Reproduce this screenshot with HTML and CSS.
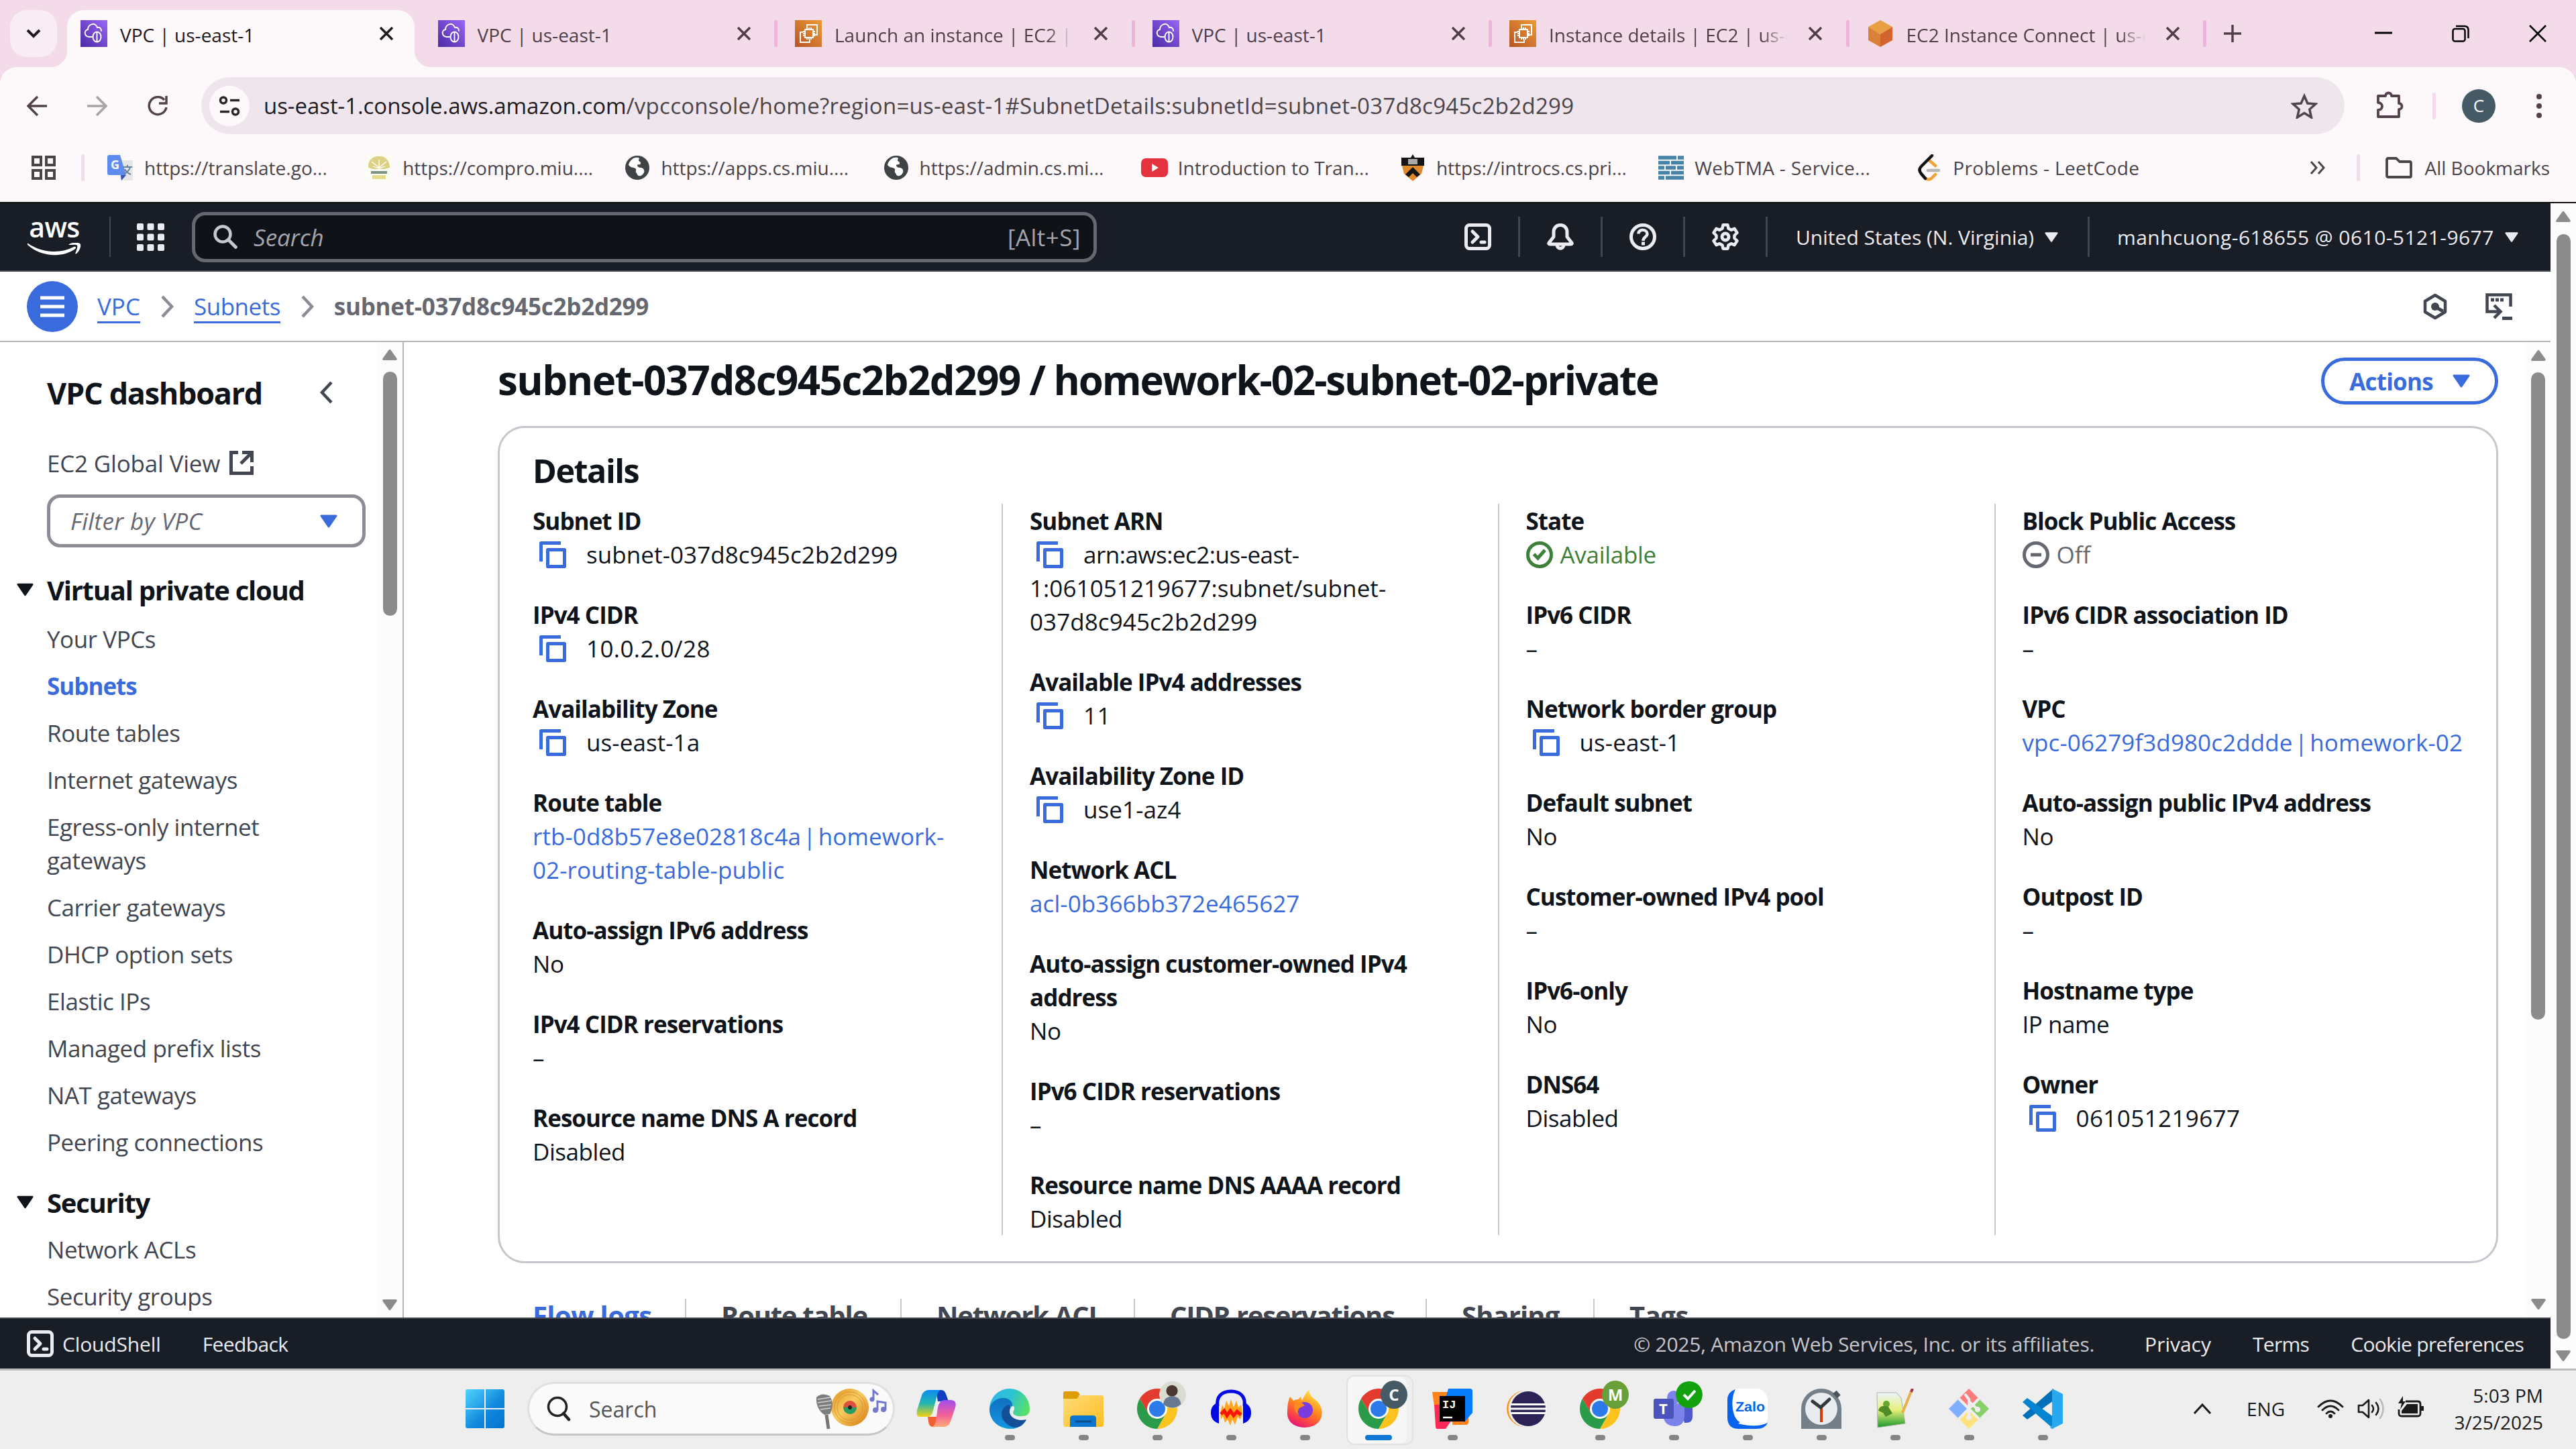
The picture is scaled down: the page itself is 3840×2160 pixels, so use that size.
FILE: index.html
```html
<!DOCTYPE html>
<html lang="en">
<head>
<meta charset="utf-8">
<title>VPC | us-east-1</title>
<link rel="stylesheet" href="styles.css">
</head>
<body>
<svg class="defs" aria-hidden="true">
  <defs>
    <linearGradient id="gVpc" x1="0" y1="1" x2="1" y2="0"><stop offset="0" stop-color="#4a2aa4"/><stop offset="1" stop-color="#9a66f6"/></linearGradient>
    <linearGradient id="gEc2" x1="0" y1="1" x2="1" y2="0"><stop offset="0" stop-color="#b85426"/><stop offset="1" stop-color="#ec9c36"/></linearGradient>
    <linearGradient id="gWin" x1="0" y1="0" x2="1" y2="1"><stop offset="0" stop-color="#50d4fe"/><stop offset=".6" stop-color="#0f86dc"/><stop offset="1" stop-color="#0474d0"/></linearGradient>
    <linearGradient id="gEdge" x1="0" y1="0" x2="1" y2=".5"><stop offset="0" stop-color="#2fb4ee"/><stop offset=".5" stop-color="#2cc3d2"/><stop offset="1" stop-color="#5be25f"/></linearGradient>
    <linearGradient id="gEdgeB" x1="0" y1="0" x2="0" y2="1"><stop offset="0" stop-color="#0f6fc0"/><stop offset="1" stop-color="#1596e2"/></linearGradient>
    <linearGradient id="gFold" x1="0" y1="0" x2="1" y2="1"><stop offset="0" stop-color="#ffdc78"/><stop offset="1" stop-color="#fcbd23"/></linearGradient>
    <linearGradient id="gCopA" x1="0" y1="0" x2="0" y2="1"><stop offset="0" stop-color="#0b8df0"/><stop offset=".5" stop-color="#23b6b0"/><stop offset="1" stop-color="#f3d111"/></linearGradient>
    <linearGradient id="gCopB" x1="0" y1="0" x2="0" y2="1"><stop offset="0" stop-color="#a24af0"/><stop offset=".55" stop-color="#f2609a"/><stop offset="1" stop-color="#ffab72"/></linearGradient>
    <linearGradient id="gFox" x1=".8" y1="0" x2=".3" y2="1"><stop offset="0" stop-color="#fff04c"/><stop offset=".45" stop-color="#ff8f1c"/><stop offset=".8" stop-color="#fb3d48"/><stop offset="1" stop-color="#e0157c"/></linearGradient>
    <linearGradient id="gGold" x1="0" y1="0" x2="1" y2="1"><stop offset="0" stop-color="#e08f17"/><stop offset=".45" stop-color="#f8cc63"/><stop offset="1" stop-color="#d8780c"/></linearGradient>
    <linearGradient id="gNpp" x1="0" y1="0" x2="0" y2="1"><stop offset="0" stop-color="#eef4fb"/><stop offset=".5" stop-color="#e6f07a"/><stop offset="1" stop-color="#17982a"/></linearGradient>
    <symbol id="vpc" viewBox="0 0 40 40"><path fill="url(#gVpc)" d="M0 0h40v40H0z"/><path fill="none" stroke="#fff" stroke-width="2" stroke-linecap="round" d="M17 25h-4c-8-1-8-10-2-11 0-8 11-12 14-3 5-1 6 3 6 5"/><ellipse cx="24.500" cy="25" rx="6" ry="7.500" fill="#6a41cc" stroke="#fff" stroke-width="2"/><path d="M24.500 18v14" stroke="#fff" stroke-width="2"/></symbol>
    <symbol id="ec2" viewBox="0 0 40 40"><path fill="url(#gEc2)" d="M0 0h40v40H0z"/><g fill="none" stroke="#fff" stroke-width="2"><path d="M18 11V7h15v15h-5M12 18H8v15h14v-4"/><rect x="15" y="14" width="12" height="12"/><path d="M18 11v3m3-3v3m3-3v3m-6 12v3m3-3v3m3-3v3M12 17h3m-3 3h3m-3 3h3m12-6h3m-3 3h3m-3 3h3"/></g></symbol>
    <symbol id="cube" viewBox="0 0 40 40"><path fill="#e8a042" d="m20 0 18 10-18 11L2 10z"/><path fill="#dc8038" d="m2 10 18 11v19L2 30z"/><path fill="#d3632f" d="m38 10-18 11v19l18-10z"/></symbol>
    <symbol id="x" viewBox="0 0 20 20"><path stroke="currentColor" stroke-width="3.500" d="m1 1 18 18M19 1 1 19"/></symbol>
    <symbol id="globe" viewBox="0 0 36 36"><circle cx="18" cy="18" r="18" fill="#3f4346"/><path fill="#fff" d="M20 3c-8-2-14 5-15 11 4 5 7 3 10 5s-1 5 2 7c1 3 3 6 8 3 6-5 3-10-1-11-3 0-6-1-6-4 1-2 5 1 5-3 0-3-3-2-3-4s2-2 0-4z"/></symbol>
    <symbol id="copy" viewBox="0 0 40 40"><path fill="none" stroke="#3a6bdc" stroke-width="5" d="M32 2.500H2.500V30M12.500 12.500h25v25h-25z" stroke-linejoin="round"/></symbol>
    <symbol id="down" viewBox="0 0 26 20"><path fill="currentColor" stroke="currentColor" stroke-width="3" stroke-linejoin="round" d="M2 2h22L13 18z"/></symbol>
    <symbol id="up" viewBox="0 0 26 20"><path fill="#8b8b8b" stroke="#8b8b8b" stroke-width="4" stroke-linejoin="round" d="M3 17h20L13 3z"/></symbol>
    <symbol id="dn" viewBox="0 0 26 20"><path fill="#8b8b8b" stroke="#8b8b8b" stroke-width="4" stroke-linejoin="round" d="M3 3h20L13 17z"/></symbol>
    <symbol id="chev" viewBox="0 0 20 34"><path fill="none" stroke="currentColor" stroke-width="4.500" d="m2 2 14 15L2 32"/></symbol>
    <symbol id="term" viewBox="0 0 40 40"><rect x="2.500" y="2.500" width="35" height="35" rx="5" fill="none" stroke="currentColor" stroke-width="5"/><path fill="none" stroke="currentColor" stroke-width="5" stroke-linecap="round" stroke-linejoin="round" d="m12 12 8 8-8 8m13 0h5"/></symbol>
    <symbol id="lens" viewBox="0 0 36 36"><circle cx="14" cy="14" r="11.500" fill="none" stroke="currentColor" stroke-width="4.500"/><path stroke="currentColor" stroke-width="5" d="m22 22 13 13"/></symbol>
    <symbol id="chrome" viewBox="0 0 60 60"><path fill="#fcc31e" d="M30 16h26.500A30 30 0 0 1 30 60l13-23z"/><path fill="#2a9b48" d="M17 37 4 15a30 30 0 0 0 26 45l13-23z"/><path fill="#e33b2e" d="M17 37 4 15a30 30 0 0 1 52.500 1H30z"/><circle cx="30" cy="30" r="15" fill="#fff"/><circle cx="30" cy="30" r="12" fill="#2d7bea"/></symbol>
  </defs>
</svg>

<div class="tabstrip">
  <div class="tabsearch"><svg width="22" height="14" viewBox="0 0 22 14"><path fill="none" stroke="#1f1a1d" stroke-width="4" d="m2 2 9 9 9-9"/></svg></div>
  <div class="tab active"><svg class="fav"><use href="#vpc"/></svg><span>VPC | us-east-1</span><svg class="close"><use href="#x"/></svg></div>
  <div class="tab sep"><svg class="fav"><use href="#vpc"/></svg><span>VPC | us-east-1</span><svg class="close"><use href="#x"/></svg></div>
  <div class="tab sep"><svg class="fav"><use href="#ec2"/></svg><span class="fade">Launch an instance | EC2 | us-east-1</span><svg class="close"><use href="#x"/></svg></div>
  <div class="tab sep"><svg class="fav"><use href="#vpc"/></svg><span>VPC | us-east-1</span><svg class="close"><use href="#x"/></svg></div>
  <div class="tab sep"><svg class="fav"><use href="#ec2"/></svg><span class="fade">Instance details | EC2 | us-east-1</span><svg class="close"><use href="#x"/></svg></div>
  <div class="tab sep"><svg class="fav"><use href="#cube"/></svg><span class="fade">EC2 Instance Connect | us-east-1</span><svg class="close"><use href="#x"/></svg></div>
  <svg class="plus" width="26" height="26" viewBox="0 0 26 26"><path stroke="#4f3f49" stroke-width="3.500" d="M13 0v26M0 13h26"/></svg>
  <div class="winbtns">
    <svg width="26" height="26" viewBox="0 0 26 26"><path stroke="#000" stroke-width="3" d="M0 12h26"/></svg>
    <svg width="26" height="26" viewBox="0 0 26 26"><g fill="none" stroke="#000" stroke-width="2.500"><rect x="1.500" y="6" width="18" height="18.500" rx="3"/><path d="M6 2h13q5.500 0 5.500 6v12"/></g></svg>
    <svg width="26" height="26" viewBox="0 0 26 26"><path stroke="#000" stroke-width="2.500" d="m1 1 24 24M25 1 1 25"/></svg>
  </div>
</div>

<div class="chrome">
  <div class="toolbar">
    <svg class="nav n1" viewBox="0 0 30 30"><path fill="none" stroke="#52414b" stroke-width="3.500" d="M30 15H2M16 1 2 15l14 14"/></svg>
    <svg class="nav n2" viewBox="0 0 30 30"><path fill="none" stroke="#a8a3a6" stroke-width="3.500" d="M0 15h28M14 1l14 14-14 14"/></svg>
    <svg class="nav n3" viewBox="0 0 30 30"><path fill="none" stroke="#52414b" stroke-width="3.500" d="M28 17A13 13 0 1 1 25 6M28 0v11H17"/></svg>
    <div class="omnibox">
      <span class="site"><svg width="32" height="30" viewBox="0 0 32 30"><g fill="none" stroke="#2a2428" stroke-width="3.500"><circle cx="7" cy="6.500" r="4.500"/><path d="M17 6.500h14M2 23.500h14"/><circle cx="25" cy="23.500" r="4.500"/></g></svg></span>
      <span class="url"><b>us-east-1.console.aws.amazon.com</b>/vpcconsole/home?region=us-east-1#SubnetDetails:subnetId=subnet-037d8c945c2b2d299</span>
      <svg class="star" viewBox="0 0 40 38"><path fill="none" stroke="#4f454b" stroke-width="3.500" d="m20 4 4.800 11 12 1-9 8 2.700 12L20 29.500 9.500 36l2.700-12-9-8 12-1z"/></svg>
    </div>
    <svg class="ext" viewBox="0 0 40 40"><path fill="none" stroke="#52414b" stroke-width="3.800" stroke-linejoin="round" d="M2 7h11c0-6 9-6 9 0h11v11c6 0 6 9 0 9v11H2V28c8 0 8-11 0-11z"/></svg>
    <i class="vline"></i>
    <span class="avatar">C</span>
    <svg class="dots" viewBox="0 0 8 36"><g fill="#52414b"><circle cx="4" cy="4" r="4"/><circle cx="4" cy="18" r="4"/><circle cx="4" cy="32" r="4"/></g></svg>
  </div>
  <div class="bookmarks">
    <svg class="apps" viewBox="0 0 36 36"><path fill="none" stroke="#4a4347" stroke-width="4" d="M2 2h12v12H2zM22 2h12v12H22zM2 22h12v12H2zM22 22h12v12H22z"/></svg>
    <i class="vline"></i>
    <div class="bm"><svg viewBox="0 0 40 40"><path fill="#e3e5e8" d="M14 9h24v30H20z"/><path fill="#5d8bee" d="M3 1h16l9 30H3q-3 0-3-3V4q0-3 3-3z"/><path fill="#3c50b4" d="m20 31 8 0-7 8z"/><text x="5" y="22" font-family="Open Sans" font-weight="700" font-size="18" fill="#fff">G</text><path stroke="#6c8296" stroke-width="2" fill="none" d="M24 19h13M30 16v3m4 0c-1 5-6 9-9 10m1-7c2 4 6 7 9 8"/></svg><span>https://translate.go...</span></div>
    <div class="bm"><svg viewBox="0 0 40 40"><path fill="#fbfcf4" d="M0 0h40v40H0z"/><path fill="#dcd182" d="M4 20C3 8 12 2 20 3c9-1 16 6 16 17l-8 2H12z"/><path stroke="#fff" stroke-width="1.300" fill="none" d="M20 22V8m0 12L9 11m11 9 11-9m-20 7 9 3 9-3"/><path stroke="#7d9384" stroke-width="4" d="M8 27h24"/><path stroke="#e4db8b" stroke-width="6" d="M10 34h20"/></svg><span>https://compro.miu....</span></div>
    <div class="bm"><svg viewBox="-2 -2 40 40"><use href="#globe" width="36" height="36"/></svg><span>https://apps.cs.miu....</span></div>
    <div class="bm"><svg viewBox="-2 -2 40 40"><use href="#globe" width="36" height="36"/></svg><span>https://admin.cs.mi...</span></div>
    <div class="bm"><svg viewBox="0 0 40 40"><rect y="6" width="40" height="28" rx="7" fill="#e5323f"/><path fill="#fff" d="m16 14 10 6-10 6z"/></svg><span>Introduction to Tran...</span></div>
    <div class="bm"><svg viewBox="0 0 40 40"><path fill="#151515" d="M20 0l3 5h14v12H3V5h14z"/><path fill="#aaa" d="M13 7h14v8H13z"/><path fill="#e08a2e" d="M4 17h32l-3 12-13 11L7 29z"/><path fill="#151515" d="m20 19 11 11-5 4-6-6-6 6-5-4z"/></svg><span>https://introcs.cs.pri...</span></div>
    <div class="bm wide"><svg viewBox="0 0 40 40"><g stroke="#4683a8" stroke-width="5.500" fill="none"><path d="M1 5h27m2 0h9M1 12.500h17m2 0h19M1 20h9m2 0h15m2 0h10M1 27.500h17m2 0h19M1 35h9m2 0h27"/></g></svg><span>WebTMA - Service...</span></div>
    <div class="bm wide"><svg viewBox="0 0 40 40"><g fill="none" stroke-width="4.500" stroke-linecap="round"><path stroke="#f0a235" d="m20 9 9 8M29 30l-6 6q-4 3-8 0"/><path stroke="#111" d="M24 2 8 18q-5 5 0 11l6 7"/><path stroke="#b5b5b5" d="M18 24h16"/></g></svg><span>Problems - LeetCode</span></div>
    <svg class="more" viewBox="0 0 24 20"><path fill="none" stroke="#4a4347" stroke-width="3" d="m2 1 8 9-8 9M13 1l8 9-8 9"/></svg>
    <i class="vline"></i>
    <svg class="folder" viewBox="0 0 40 32"><path fill="none" stroke="#4a4347" stroke-width="3.800" stroke-linejoin="round" d="M4 2h12l5 5h15q2 0 2 2v19q0 2-2 2H4q-2 0-2-2V4q0-2 2-2z"/></svg>
    <span class="all">All Bookmarks</span>
  </div>
</div>

<div class="page">
  <div class="app">
    <header class="awsnav">
      <div class="logo"><span>aws</span><svg viewBox="0 0 80 20"><path fill="#fff" d="M1 1c22 15 48 15 68 5 3-1 4 1 2 3C52 23 20 21 0 3c-1-2 0-3 1-2z"/><path fill="#fff" d="M62 2c5-3 13-3 16-1s0 11-5 15c-2 1-2 0-1-2 1-3 3-8 2-10s-7-1-11-1c-1 0-2 0-1-1z"/></svg></div>
      <i class="hline l1"></i>
      <svg class="grid9" viewBox="0 0 41 41"><g fill="#ebebf0"><rect width="10" height="10" rx="2"/><rect x="15.500" width="10" height="10" rx="2"/><rect x="31" width="10" height="10" rx="2"/><rect y="15.500" width="10" height="10" rx="2"/><rect x="15.500" y="15.500" width="10" height="10" rx="2"/><rect x="31" y="15.500" width="10" height="10" rx="2"/><rect y="31" width="10" height="10" rx="2"/><rect x="15.500" y="31" width="10" height="10" rx="2"/><rect x="31" y="31" width="10" height="10" rx="2"/></g></svg>
      <div class="search"><svg><use href="#lens"/></svg><em>Search</em><span>[Alt+S]</span></div>
      <div class="tools">
        <div><svg><use href="#term"/></svg></div>
        <div><svg viewBox="0 0 40 40"><g fill="none" stroke="currentColor" stroke-width="5" stroke-linejoin="round"><path d="M10 13c0-14 20-14 20 0v7l7 9q1 2-2 2H5q-3 0-2-2l7-9z"/><path d="M15 32c0 7 10 7 10 0"/></g></svg></div>
        <div><svg viewBox="0 0 40 40"><circle cx="20" cy="20" r="17.500" fill="none" stroke="currentColor" stroke-width="5"/><path fill="none" stroke="currentColor" stroke-width="4.500" d="M13.500 15.500c0-8 13-7 13 0 0 5-6 4-6 10.500"/><path stroke="currentColor" stroke-width="5" d="M20.500 27.500v5"/></svg></div>
        <div><svg viewBox="0 0 40 40"><path fill="none" stroke="currentColor" stroke-width="4.500" stroke-linejoin="round" d="M16.500 2.300h7l1 5.200 4 2.300 5-2 4 6.200-4 4v4l4 4-4 6.200-5-2-4 2.300-1 5.200h-7l-1-5.200-4-2.300-5 2L2.500 26l4-4v-4l-4-4 4-6.200 5 2 4-2.300z"/><circle cx="20" cy="20" r="5" fill="none" stroke="currentColor" stroke-width="5"/></svg></div>
      </div>
      <div class="region"><span>United States (N. Virginia)</span><svg><use href="#down"/></svg></div>
      <div class="account"><span>manhcuong-618655 @ 0610-5121-9677</span><svg><use href="#down"/></svg></div>
    </header>

    <div class="crumbs">
      <span class="burger"><svg viewBox="0 0 36 32"><path stroke="#fff" stroke-width="5" d="M0 3h36M0 16h36M0 29h36"/></svg></span>
      <a>VPC</a><svg class="cv"><use href="#chev"/></svg><a class="sn">Subnets</a><svg class="cv"><use href="#chev"/></svg><b>subnet-037d8c945c2b2d299</b>
      <svg class="hex" viewBox="0 0 36 40"><path fill="none" stroke="#424650" stroke-width="4.500" stroke-linejoin="round" d="M18 3 33 12v16l-15 9-15-9V12z"/><circle cx="18" cy="20" r="6" fill="#424650"/><path stroke="#424650" stroke-width="5" d="m19 21 11 6"/></svg>
      <svg class="feed" viewBox="0 0 40 40"><path fill="none" stroke="#424650" stroke-width="4.500" d="M37.500 20V2.500h-35v25H22M13 18l9.500 9.500L13 37"/><path stroke="#424650" stroke-width="5" d="M25 37.500h15M8 10h5m2 0h5m2 0h5"/></svg>
    </div>

    <div class="body">
      <nav class="side">
        <div class="links">
          <div class="dash"><h2>VPC dashboard</h2><svg viewBox="0 0 20 34"><path fill="none" stroke="#424650" stroke-width="4.500" d="M18 2 4 17l14 15"/></svg></div>
          <div class="gv">EC2 Global View<svg viewBox="0 0 36 36"><path fill="none" stroke="#424650" stroke-width="5" d="M13 2.500H2.500v31h31V23M19 2.500h14.500V17M33 3 17 19"/></svg></div>
          <div class="filter"><em>Filter by VPC</em><svg><use href="#down"/></svg></div>
          <h3><svg><use href="#down"/></svg>Virtual private cloud</h3>
          <a>Your VPCs</a><a class="cur">Subnets</a><a>Route tables</a><a>Internet gateways</a><a>Egress-only internet<br>gateways</a><a>Carrier gateways</a><a>DHCP option sets</a><a>Elastic IPs</a><a>Managed prefix lists</a><a>NAT gateways</a><a>Peering connections</a>
          <h3><svg><use href="#down"/></svg>Security</h3>
          <a>Network ACLs</a><a>Security groups</a>
        </div>
        <div class="sb s1"><svg><use href="#up"/></svg><i></i><svg><use href="#dn"/></svg></div>
      </nav>
      <main>
        <div class="content">
          <div class="title"><h1><span>subnet-037d8c945c2b2d299</span> / homework-02-subnet-02-private</h1><div class="actions">Actions<svg><use href="#down"/></svg></div></div>
          <section class="card">
            <h2>Details</h2>
            <div class="cols">
              <dl>
                <div><dt>Subnet ID</dt><dd class="id"><svg class="cp"><use href="#copy"/></svg>subnet-037d8c945c2b2d299</dd></div>
                <div><dt>IPv4 CIDR</dt><dd class="num"><svg class="cp"><use href="#copy"/></svg>10.0.2.0/28</dd></div>
                <div><dt>Availability Zone</dt><dd class="id"><svg class="cp"><use href="#copy"/></svg>us-east-1a</dd></div>
                <div><dt>Route table</dt><dd class="lk">rtb-0d8b57e8e02818c4a | homework-<br>02-routing-table-public</dd></div>
                <div><dt>Auto-assign IPv6 address</dt><dd>No</dd></div>
                <div><dt>IPv4 CIDR reservations</dt><dd>–</dd></div>
                <div><dt>Resource name DNS A record</dt><dd>Disabled</dd></div>
              </dl>
              <dl>
                <div><dt>Subnet ARN</dt><dd class="id"><svg class="cp"><use href="#copy"/></svg><span class="arn">arn:aws:ec2:us-east-</span><br>1:061051219677:subnet/subnet-<br>037d8c945c2b2d299</dd></div>
                <div><dt>Available IPv4 addresses</dt><dd class="num"><svg class="cp"><use href="#copy"/></svg>11</dd></div>
                <div><dt>Availability Zone ID</dt><dd class="id"><svg class="cp"><use href="#copy"/></svg>use1-az4</dd></div>
                <div><dt>Network ACL</dt><dd class="lk">acl-0b366bb372e465627</dd></div>
                <div><dt>Auto-assign customer-owned IPv4<br>address</dt><dd>No</dd></div>
                <div><dt>IPv6 CIDR reservations</dt><dd>–</dd></div>
                <div><dt>Resource name DNS AAAA record</dt><dd>Disabled</dd></div>
              </dl>
              <dl>
                <div><dt>State</dt><dd class="ok"><svg class="st" viewBox="0 0 40 40"><circle cx="20" cy="20" r="17.500" fill="none" stroke="currentColor" stroke-width="5"/><path fill="none" stroke="currentColor" stroke-width="5" d="m11.500 19 6 6L28 13"/></svg>Available</dd></div>
                <div><dt>IPv6 CIDR</dt><dd>–</dd></div>
                <div><dt>Network border group</dt><dd class="id"><svg class="cp"><use href="#copy"/></svg>us-east-1</dd></div>
                <div><dt>Default subnet</dt><dd>No</dd></div>
                <div><dt>Customer-owned IPv4 pool</dt><dd>–</dd></div>
                <div><dt>IPv6-only</dt><dd>No</dd></div>
                <div><dt>DNS64</dt><dd>Disabled</dd></div>
              </dl>
              <dl>
                <div><dt>Block Public Access</dt><dd class="off"><svg class="st" viewBox="0 0 40 40"><circle cx="20" cy="20" r="17.500" fill="none" stroke="currentColor" stroke-width="5"/><path stroke="currentColor" stroke-width="5" d="M12 20h16"/></svg>Off</dd></div>
                <div><dt>IPv6 CIDR association ID</dt><dd>–</dd></div>
                <div><dt>VPC</dt><dd class="lk">vpc-06279f3d980c2ddde | homework-02</dd></div>
                <div><dt>Auto-assign public IPv4 address</dt><dd>No</dd></div>
                <div><dt>Outpost ID</dt><dd>–</dd></div>
                <div><dt>Hostname type</dt><dd>IP name</dd></div>
                <div><dt>Owner</dt><dd class="num"><svg class="cp"><use href="#copy"/></svg>061051219677</dd></div>
              </dl>
            </div>
          </section>
          <div class="dtabs"><span class="t1">Flow logs</span><span class="t2">Route table</span><span class="t3">Network ACL</span><span class="t4">CIDR reservations</span><span class="t5">Sharing</span><span class="t6">Tags</span></div>
        </div>
        <div class="sb s2"><svg><use href="#up"/></svg><i></i><svg><use href="#dn"/></svg></div>
      </main>
    </div>

    <footer><svg><use href="#term"/></svg><span class="f1">CloudShell</span><span class="f2">Feedback</span><span class="f3">© 2025, Amazon Web Services, Inc. or its affiliates.</span><span class="f4">Privacy</span><span class="f5">Terms</span><span class="f6">Cookie preferences</span></footer>
  </div>
  <div class="sb s3"><svg><use href="#up"/></svg><i></i><svg><use href="#dn"/></svg></div>
</div>

<div class="taskbar">
  <svg class="win" viewBox="0 0 58 58"><path fill="url(#gWin)" d="M3 0h25v28H0V3q0-3 3-3zM30 0h25q3 0 3 3v25H30zM0 30h28v28H3q-3 0-3-3zM30 30h28v25q0 3-3 3H30z"/></svg>
  <div class="tsearch"><svg class="tl" viewBox="0 0 36 38"><circle cx="16" cy="16" r="13.500" fill="none" stroke="#222" stroke-width="3.500"/><path stroke="#222" stroke-width="4.500" stroke-linecap="round" d="m25 26 8 9"/></svg><span>Search</span>
    <svg class="music" viewBox="0 0 108 62"><circle cx="52" cy="29" r="28" fill="url(#gGold)"/><circle cx="52" cy="29" r="19" fill="none" stroke="#d9982c" stroke-width="1"/><circle cx="52" cy="29" r="23" fill="none" stroke="#d9982c" stroke-width="1"/><path fill="#e0503f" d="M42 29a10 10 0 0 1 20 0z"/><path fill="#2a9c64" d="M42 29a10 10 0 0 0 20 0z"/><circle cx="52" cy="29" r="3" fill="#222"/><path fill="#7d7d7d" d="M2 14q8-8 20-2c6 10 4 20 0 27l-8 1C6 35 1 25 2 14z"/><path stroke="#d4d4d4" stroke-width="1.500" d="m4 17 19-3M4 22l20-3M6 27l18-2M8 32l15-2"/><path stroke="#777" stroke-width="5" d="m17 40 3 21"/><g fill="none" stroke="#7277cf" stroke-width="3"><path d="M87 17V4l7 6M93 33V20l12 2v11"/></g><g fill="#7277cf"><circle cx="85" cy="17" r="3.500"/><circle cx="90" cy="33" r="4"/><circle cx="102" cy="32" r="4"/></g></svg></div>
  <div class="icons">
    <div class="noind"><svg viewBox="0 0 60 60"><path fill="#113fc4" d="M30 2h8q5 0 7 6l4 11H33z"/><path fill="url(#gCopA)" d="M20 2h18q-4 0-6 8l-7 26q-2 6-8 6H6q-6 0-4-10l7-22q3-8 11-8z"/><path fill="#f25f30" d="M18 42h13l3-8-5 23q-9 2-10-8z"/><path fill="url(#gCopB)" d="M33 28q2-10 9-11h11q9 1 6 11l-7 21q-3 8-10 8H24q4-1 6-8z"/></svg></div>
    <div><svg viewBox="0 0 60 60"><circle cx="30" cy="30" r="30" fill="url(#gEdge)"/><path fill="#eee" d="M60 33q-1 7-10 8-12 1-15-4l-4 12 27-2z"/><path fill="url(#gEdgeB)" d="M0 30C2 18 14 13 22 14c9 1 13 7 12 12-9 0-14 10-10 20 5 9 14 10 30 2-8 12-22 14-32 10C6 54 0 42 0 30z"/><path fill="#134f96" d="M18 37c1-8 6-12 11-13 4 2 1 6 1 10 1 8 11 15 25 12-7 14-20 14-27 8-6-4-10-9-10-17z"/><path fill="#eee" d="M33 27q5-3 4 4-3 4-1 8 4 5 13 4 6-1 9-4l-2 6c-14 5-26-2-26-11q0-4 3-7z"/></svg></div>
    <div><svg viewBox="0 0 60 60"><path fill="#e09c05" d="M0 6q0-2 3-2h16q4 0 6 6H0z"/><path fill="#e09c05" d="M0 6h20l5 8v6H0z"/><path fill="url(#gFold)" d="M0 15h20l5-5h32q3 0 3 3v41q0 3-3 3H3q-3 0-3-3z"/><path fill="#0a76d0" d="M10 57V45q0-5 5-5h29q5 0 5 5v12z"/><path stroke="#094f8e" stroke-width="3" d="M18 49h24"/></svg></div>
    <div><svg viewBox="0 0 60 60"><use href="#chrome"/></svg><svg class="face" viewBox="0 0 42 42"><circle cx="21" cy="21" r="21" fill="#d9dcd0"/><circle cx="20" cy="15" r="9" fill="#4b3830"/><path fill="#667990" d="M6 36q2-12 14-13 13 1 14 13-13 11-28 0z"/></svg></div>
    <div><svg viewBox="0 0 60 60"><path fill="none" stroke="#0008e6" stroke-width="5" d="M10 26C8 12 16 4 30 4s22 8 20 22"/><path fill="#0008e6" d="M12 20v32q-12-4-12-16t12-16zM48 20v32q12-4 12-16T48 20z"/><path fill="#ffa41c" d="m14 36 3-12 3 6 3-12 4 8 3-10 4 12 4-10 3 10 4-4 2 12-3 10-4-4-4 12-4-8-3 9-4-9-4 5-3-10-3 5z"/><path stroke="#fa1307" stroke-width="5" fill="none" d="m15 38 5-5 4 7 5-7 5 7 5-6 6 5"/></svg></div>
    <div><svg viewBox="0 0 60 60"><path fill="url(#gFox)" d="M8 12l5 6q3-2 7-2l4-4 2 6q4-10 10-16 1 9 9 14 13 10 10 25-4 16-25 17C10 57 3 46 4 34q0-14 4-22z"/><circle cx="30" cy="32" r="12" fill="#7a3ce0"/><path fill="#ff8a1e" d="M14 22q10-4 16 3l-8 4q-5 6 0 10-8-2-8-17z"/></svg></div>
    <div class="on"><svg viewBox="0 0 60 60"><use href="#chrome"/></svg><b class="badge c">C</b></div>
    <div><svg viewBox="0 0 60 60"><path fill="#ff8318" d="M0 5h26L10 32 3 26zM30 48l24-16v18q0 4-4 4H30z"/><path fill="#fe2857" d="M3 24h25v24l-8 12H8q-3 0-3-3z"/><path fill="#077cfb" d="M24 0h32q4 0 4 4v32l-12 14-28-36z"/><path fill="#000" d="M11 11h38v38H11z"/><path stroke="#fff" stroke-width="2.500" d="M16 43h14"/><text x="15" y="29" font-family="Liberation Mono" font-weight="700" font-size="17" fill="#fff">IJ</text></svg></div>
    <div class="noind"><svg viewBox="0 0 60 60"><circle cx="28" cy="30" r="27" fill="#f7941e"/><circle cx="31" cy="30" r="27.500" fill="#eee"/><circle cx="33" cy="30" r="26" fill="#2c2255"/><path stroke="#fff" stroke-width="3" d="M6 23.500h54M6 30h54M6 36.500h54"/></svg></div>
    <div><svg viewBox="0 0 60 60"><use href="#chrome"/></svg><b class="badge m">M</b></div>
    <div><svg viewBox="0 0 60 60"><circle cx="30" cy="13" r="10" fill="#7b83eb"/><path fill="#5059c9" d="M38 22h20v20q0 10-12 9z"/><path fill="#7b83eb" d="M15 22h31v20q-1 14-15 14-12 0-16-11z"/><rect y="15" width="30" height="30" rx="3" fill="#4b53bc"/><text x="8" y="38" font-family="Open Sans" font-weight="700" font-size="22" fill="#fff">T</text></svg><svg class="tick" viewBox="0 0 40 40"><circle cx="20" cy="20" r="20" fill="#13a10e"/><path fill="none" stroke="#fff" stroke-width="4" d="m12 20 6 6 11-12"/></svg></div>
    <div><svg viewBox="0 0 60 60"><rect width="60" height="60" rx="17" fill="#fff"/><path fill="#0763ec" d="M12 1Q0 5 0 17v26q0 17 17 17h26q13 0 17-9-17 8-44 1 4-2 1-3C7 42 4 16 12 1z"/><text x="12" y="34" font-family="Liberation Sans" font-weight="700" font-size="20" textLength="44" lengthAdjust="spacingAndGlyphs" fill="#0763ec">Zalo</text></svg></div>
    <div><svg viewBox="0 0 60 60"><path fill="#737f89" d="M0 30a30 30 0 0 1 60 0v30H0z"/><path stroke="#4c545b" stroke-width="7" d="m50 5 6 7"/><circle cx="30" cy="30" r="24" fill="#e9ecee"/><path stroke="#d83b01" stroke-width="4" d="M30 28v22"/><path fill="none" stroke="#33383d" stroke-width="5" stroke-linecap="round" d="m17 19 12 9 13-12"/></svg></div>
    <div><svg viewBox="0 0 60 60"><path fill="url(#gNpp)" stroke="#aab4a8" d="M3 6h29l7 8 6 38L4 58z"/><circle cx="17" cy="23" r="5" fill="#63a82b"/><path fill="#4f8c25" d="M5 33q2-10 15-6l6 10-10 5-4-6z"/><path stroke="#e8b04a" stroke-width="4" d="M54 4 41 36"/><path stroke="#a5333e" stroke-width="4" d="m56 0-2 5"/></svg></div>
    <div><svg viewBox="0 0 60 60"><path fill="#ff7d7d" d="m30 0 15 15-15 15-15-15z"/><path fill="#7fb0ff" d="m15 15 15 15-15 15L0 30z"/><path fill="#87d068" d="m45 15 15 15-15 15-15-15z"/><path fill="#ffe17d" d="m30 30 15 15-15 15-15-15z"/><path fill="none" stroke="#eee" stroke-width="4" d="M24 8l6 8v30M30 19l13 12M15 15l30 30M45 15 15 45"/><circle cx="30" cy="43" r="4" fill="#eee"/><circle cx="43" cy="31" r="4" fill="#eee"/></svg></div>
    <div><svg viewBox="0 0 60 60"><path fill="#0071b8" d="M46 0v18L7 46 0 40z"/><path fill="#0584cf" d="M46 60V42L7 14 0 20z"/><path fill="#28a8ee" d="M44 0l16 8v44l-16 8-3-2 3-4V6z"/></svg></div>
  </div>
  <svg class="tup" viewBox="0 0 28 16"><path fill="none" stroke="#1a1a1a" stroke-width="3" d="m2 15 12-13 12 13"/></svg>
  <span class="eng">ENG</span>
  <svg class="wifi" viewBox="0 0 40 28"><g fill="none" stroke="#1a1a1a" stroke-width="2.800" stroke-linecap="round"><path d="M2 11q18-18 36 0M8 16q12-12 24 0M14 21q6-6 12 0"/></g><circle cx="20" cy="25" r="3" fill="#1a1a1a"/></svg>
  <svg class="vol" viewBox="0 0 40 34"><g fill="none" stroke="#1a1a1a" stroke-width="2.600" stroke-linejoin="round" stroke-linecap="round"><path d="M2 12h6l9-8v26l-9-8H2zM22 12q4 5 0 10M28 8q7 9 0 18"/><path stroke="#bbb" d="M34 3q9 14 0 28"/></g></svg>
  <svg class="bat" viewBox="0 0 40 34"><g fill="none" stroke="#1a1a1a" stroke-width="2.800"><path d="M12 8h18q4 0 4 4v14q0 4-4 4H6q-4 0-4-4v-6"/></g><path fill="#1a1a1a" d="M14 12h16v14H6v-4zM35 15h4v7h-4zM8 0 1 11h5l-2 9 8-12H8z"/></svg>
  <div class="clock"><span>5:03 PM</span><span>3/25/2025</span></div>
</div>
</body>
</html>
```
FILE: styles.css
```css
* { box-sizing: border-box; }
body { margin: 0; width: 3840px; height: 2160px; overflow: hidden; display: flex; flex-direction: column; background: #f3dbe9; font-family: "Open Sans", sans-serif; white-space: nowrap; }
svg { display: block; flex: none; }
i { display: block; flex: none; }
h1, h2, h3, dl, dd { margin: 0; }
.defs { position: absolute; width: 0; height: 0; }

/* browser tab strip */
.tabstrip { height: 100px; display: flex; align-items: center; flex: none; font-size: 28px; color: #4f3f49; }
.tabsearch { width: 70px; height: 70px; margin: 0 15px; border-radius: 25px; background: #f9edf4; display: flex; align-items: center; justify-content: center; }
.tab { position: relative; width: 532.5px; height: 100px; display: flex; align-items: center; padding-left: 20px; }
.fav { width: 40px; height: 40px; }
.tab span { width: 356px; margin: 0 28px 0 19px; padding-top: 4px; overflow: hidden; }
.tab .fade { -webkit-mask-image: linear-gradient(90deg, #000 316px, transparent 356px); mask-image: linear-gradient(90deg, #000 316px, transparent 356px); }
.close { width: 20px; height: 20px; margin-left: 3px; }
.sep::after { content: ""; position: absolute; right: 6px; top: 30px; width: 5px; height: 40px; border-radius: 2px; background: #efb4dc; }
.active { color: #1f1a1d; isolation: isolate; }
.active::before { content: ""; position: absolute; z-index: -1; left: 0; top: 15px; width: 518px; height: 85px; border-radius: 25px 25px 0 0; background: #fdf9fb; }
.active::after { content: ""; position: absolute; z-index: -2; left: -25px; bottom: 0; width: 568px; height: 25px; background: radial-gradient(circle at 0 0, transparent 25px, #fdf9fb 25.500px) left / 25px 25px no-repeat, radial-gradient(circle at 100% 0, transparent 25px, #fdf9fb 25.500px) right / 25px 25px no-repeat; }
.plus { margin-left: 20px; }
.winbtns { margin-left: auto; display: grid; grid-template-columns: repeat(3, 115px); justify-items: center; }

/* toolbar and bookmarks */
.chrome { height: 203px; flex: none; background: #fdf9fb; border-radius: 25px 25px 0 0; border-bottom: 2px solid #111; }
.toolbar { height: 115px; display: flex; align-items: center; }
.nav { width: 30px; height: 30px; margin-left: 60px; }
.n1 { margin-left: 40px; }
.omnibox { width: 3195px; height: 85px; margin-left: 50px; border-radius: 43px; background: #efe6ed; display: flex; align-items: center; padding-left: 12px; }
.site { width: 60px; height: 60px; border-radius: 50%; background: #fdf9fb; display: flex; align-items: center; justify-content: center; }
.url { margin-left: 21px; font-size: 33px; color: #4c4448; letter-spacing: .27px; }
.url b { font-weight: 400; color: #1f1a1d; letter-spacing: -.05px; }
.star { width: 40px; height: 38px; margin: 0 40px 0 auto; }
.ext { width: 40px; height: 40px; margin: -4px 0 0 48px; }
.vline { width: 5px; height: 40px; border-radius: 2px; background: #f6d9ea; }
.toolbar .vline { margin-left: 43px; }
.avatar { width: 50px; height: 50px; margin-left: 39px; border-radius: 50%; background: #455a64; color: #fff; font-size: 26px; line-height: 49px; text-align: center; }
.dots { width: 8px; height: 36px; margin-left: 61px; }
.bookmarks { height: 70px; display: flex; align-items: center; font-size: 28px; color: #4a4347; }
.apps { width: 36px; height: 36px; margin: 0 38px 0 47px; }
.bookmarks .apps + .vline { margin-right: 34px; }
.bm { width: 385.2px; flex: none; display: flex; align-items: center; gap: 15px; }
.bm svg { width: 40px; height: 40px; }
.wide span { letter-spacing: .35px; }
.more { width: 24px; height: 20px; margin: 0 46px 0 201px; }
.folder { width: 40px; height: 32px; margin: 0 19px 0 38px; }

/* console page */
.page { height: 1737px; flex: none; display: flex; background: #fff; color: #0f141a; }
.app { width: 3802px; display: flex; flex-direction: column; }
.sb { background: #fcfcfc; display: flex; flex-direction: column; align-items: center; flex: none; }
.sb svg { width: 24px; height: 18px; }
.sb i { width: 21px; border-radius: 11px; background: #8b8b8b; }

.awsnav { height: 102px; flex: none; display: flex; align-items: center; background: #191d26; border-bottom: 2px solid #424650; color: #ebebf0; }
.logo { width: 80px; height: 60px; margin-left: 41px; display: flex; flex-direction: column; color: #fff; }
.logo span { font-size: 41px; font-weight: 600; line-height: 30px; height: 39px; text-align: center; letter-spacing: -.5px; }
.logo svg { width: 80px; height: 20px; }
.hline { width: 2px; height: 60px; background: #424650; }
.l1 { margin: 0 39px 0 42px; }
.grid9 { width: 41px; height: 41px; }
.search { width: 1349px; height: 75px; margin-left: 41px; border: 5px solid #656871; border-radius: 20px; background: #0f1217; display: flex; align-items: center; padding: 0 19px 0 27px; font-size: 35px; color: #a4a4ad; }
.search svg { width: 36px; height: 36px; margin-right: 24px; color: #c6c6cd; }
.search span { margin-left: auto; letter-spacing: .5px; }
.tools { margin-left: 505px; display: grid; grid-template-columns: 126px 122.500px 123px 123.500px; }
.tools div { height: 60px; border-right: 3px solid #424650; display: flex; align-items: center; padding-left: 40px; }
.tools div:first-child { padding-left: 43px; }
.tools svg { width: 40px; height: 40px; }
.region, .account { display: flex; align-items: center; height: 60px; font-size: 30px; }
.region { width: 480px; padding-left: 42px; border-right: 3px solid #424650; }
.account { padding-left: 41px; letter-spacing: .45px; }
.region svg, .account svg { width: 20px; height: 17px; margin-left: 16px; }

.crumbs { height: 105px; flex: none; display: flex; align-items: center; border-bottom: 2px solid #b4b4bb; font-size: 35px; padding-left: 40px; }
.burger { width: 76px; height: 76px; border-radius: 50%; background: #3a6bdc; display: flex; align-items: center; justify-content: center; margin-right: 29px; }
.burger svg { width: 36px; height: 32px; }
.crumbs a { color: #3a6bdc; line-height: 44px; border-bottom: 3px solid #3a6bdc; padding-top: 3px; }
.crumbs .sn { letter-spacing: -.5px; }
.crumbs b { color: #656871; letter-spacing: -.25px; }
.cv { width: 20px; height: 34px; margin: 0 29px 0 31px; color: #8c8c94; }
.hex { width: 36px; height: 40px; margin: 0 57px 0 auto; }
.feed { width: 40px; height: 40px; margin-right: 57px; }

.body { height: 1454px; flex: none; display: flex; overflow: hidden; }
.side { width: 602px; flex: none; display: flex; border-right: 2px solid #b4b4bb; }
.links { width: 562px; padding: 45px 17px 0 70px; font-size: 35px; letter-spacing: -.45px; color: #424650; }
.dash { height: 60px; display: flex; align-items: center; justify-content: space-between; padding-right: 49px; color: #0f141a; }
.dash h2 { font-size: 45px; letter-spacing: -1.300px; }
.dash svg { width: 20px; height: 34px; }
.gv { margin-top: 50px; height: 50px; display: flex; align-items: center; gap: 14px; letter-spacing: -.2px; }
.gv svg { width: 36px; height: 36px; }
.filter { margin-top: 22px; height: 79px; border: 5px solid #8c8c94; border-radius: 20px; display: flex; align-items: center; justify-content: space-between; padding: 0 37px 0 30px; color: #656871; letter-spacing: .4px; }
.filter svg { width: 26px; height: 20px; color: #3a6bdc; }
h3 { margin: 38px 0 24px; margin-left: -45px; height: 50px; display: flex; align-items: center; font-size: 40px; letter-spacing: -1.250px; color: #0f141a; }
h3 svg { width: 25px; height: 20px; margin-right: 20px; }
.links a { display: block; line-height: 50px; margin-bottom: 20px; }
.links a + h3 { margin-top: 39px; margin-bottom: 21px; }
.links .cur { color: #3a6bdc; font-weight: 700; letter-spacing: -1px; }
.s1 { width: 38px; padding-top: 10px; }
.s1 i { height: 364px; margin: 16px 0 1018px; }

main { flex: 1; display: flex; }
.content { width: 3163px; padding: 23px 0 0 140px; }
.title { width: 2982px; height: 70px; display: flex; align-items: center; justify-content: space-between; }
h1 { font-size: 60px; letter-spacing: -2.100px; padding-bottom: 4px; }
h1 span { letter-spacing: -1.500px; }
.actions { width: 264px; height: 70px; border: 5px solid #3a6bdc; border-radius: 35px; display: flex; align-items: center; justify-content: center; gap: 29px; color: #3a6bdc; font-size: 35px; font-weight: 700; letter-spacing: -.8px; }
.actions svg { width: 26px; height: 20px; }
.card { width: 2982px; height: 1248px; margin-top: 32px; border: 3px solid #c6c6cd; border-radius: 40px; padding: 34px 0 0 49px; }
.card h2 { font-size: 48.500px; letter-spacing: -1.500px; line-height: 58px; height: 60px; }
.cols { margin-top: 19px; height: 1090px; display: grid; grid-template-columns: 699px 739.500px 740px 740px; font-size: 35px; line-height: 50px; }
dl { display: flex; flex-direction: column; gap: 40px; }
dl > div { position: relative; top: 1px; }
dl + dl { border-left: 2px solid #c6c6cd; padding-left: 40px; }
dt { font-weight: 700; letter-spacing: -.95px; }
dd { letter-spacing: -.45px; }
.id { letter-spacing: .08px; }
.arn { letter-spacing: -.5px; }
.num { letter-spacing: .4px; }
.cp, .st { display: inline-block; width: 40px; height: 40px; vertical-align: -7px; }
.cp { margin: 0 30px 0 10px; }
.st { margin-right: 11px; }
.lk { color: #3a6bdc; letter-spacing: .1px; word-spacing: -6px; }
.ok { color: #3d8039; letter-spacing: -.3px; }
.off { color: #656871; letter-spacing: 0; }
.dtabs { margin: 53px 0 0 52px; display: flex; font-size: 40px; line-height: 50px; font-weight: 700; letter-spacing: -1.250px; color: #424650; }
.dtabs span { height: 60px; border-right: 2px solid #c6c6cd; padding-left: 52px; }
.dtabs .t1 { width: 229px; padding-left: 0; color: #3a6bdc; letter-spacing: -.6px; }
.dtabs .t2 { width: 321px; }
.dtabs .t3 { width: 348px; }
.dtabs .t4 { width: 435px; }
.dtabs .t5 { width: 250px; letter-spacing: -.9px; }
.dtabs .t6 { border: 0; letter-spacing: -.5px; }
.s2 { width: 37px; padding-top: 11px; }
.s2 i { height: 965px; margin: 16px 0 415px; }
.s3 { width: 38px; padding-top: 11px; }
.s3 i { height: 1647px; margin: 17px 0 16px; }

footer { height: 76px; flex: none; background: #191d26; border-top: 2px solid #424650; display: flex; align-items: center; padding: 0 40px; font-size: 30px; color: #ebebf0; }
footer svg { width: 40px; height: 40px; margin-right: 13px; }
.f1 { letter-spacing: -.15px; }
.f2 { margin-left: 62px; letter-spacing: -.6px; }
.f3 { margin-left: auto; color: #c6c6cd; letter-spacing: -.25px; }
.f4 { margin-left: 75px; }
.f5, .f6 { margin-left: 62px; letter-spacing: -.7px; }

/* windows taskbar */
.taskbar { height: 120px; flex: none; background: #eee; border-top: 3px solid #bdbdbd; display: flex; align-items: center; padding: 0 0 3px 694px; color: #1a1a1a; font-size: 28px; }
.win { width: 58px; height: 58px; }
.tsearch { width: 548px; height: 80px; margin-left: 34px; border: 3px solid #dfdfdf; border-bottom-color: #c6c6c6; border-radius: 40px; background: #fafafa; display: flex; align-items: center; padding-left: 26px; font-size: 32px; color: #555; }
.tl { width: 36px; height: 38px; margin-right: 27px; }
.music { width: 108px; height: 62px; margin: 0 8px 0 auto; }
.icons { margin-left: 6px; display: grid; grid-template-columns: repeat(16, 110px); }
.icons > div { position: relative; height: 100px; display: flex; align-items: center; justify-content: center; }
.icons > div > svg:first-child { width: 60px; height: 60px; }
.icons > div::after { content: ""; position: absolute; left: 47.500px; bottom: 3px; width: 15px; height: 8px; border-radius: 4px; background: #858585; }
.icons > .noind::after { display: none; }
.icons > .on::before { content: ""; position: absolute; left: 7px; top: 0; width: 96px; height: 100px; border: 2px solid #e2e2e2; border-radius: 12px; background: #f7f7f7; box-shadow: inset -8px 0 0 #efefef; }
.icons > .on > svg { position: relative; }
.icons > .on::after { left: 35px; width: 40px; background: #0f78d4; }
.badge, .face, .tick { position: absolute; left: 58px; top: 8px; width: 40px; height: 42px; border-radius: 50%; color: #fff; font-size: 24px; line-height: 41px; text-align: center; }
.c { background: #455a64; }
.m { background: #689f38; }
.tup { width: 28px; height: 16px; margin-left: 169px; }
.eng { margin-left: 52px; }
.wifi { width: 40px; height: 28px; margin-left: 48px; }
.vol { width: 40px; height: 34px; margin-left: 20px; }
.bat { width: 40px; height: 34px; margin: -4px 0 0 20px; }
.clock { margin: 0 49px 0 auto; display: flex; flex-direction: column; align-items: flex-end; line-height: 40px; }
```
